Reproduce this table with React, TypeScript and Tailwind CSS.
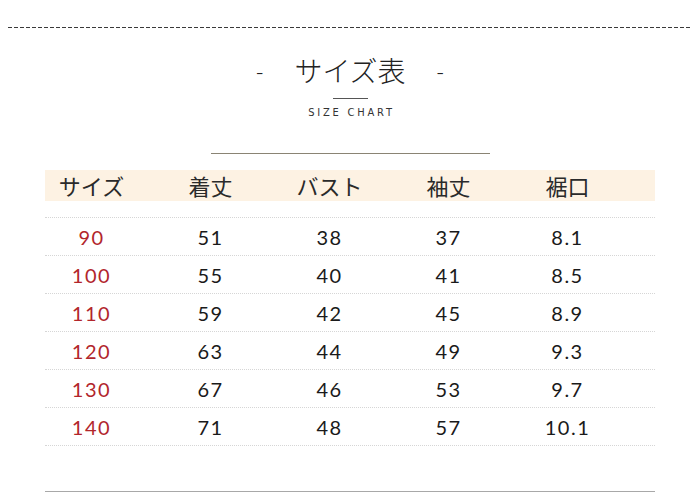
const headers = ['サイズ', '着丈', 'バスト', '袖丈', '裾口'];

const rows = [
  ['90', '51', '38', '37', '8.1'],
  ['100', '55', '40', '41', '8.5'],
  ['110', '59', '42', '45', '8.9'],
  ['120', '63', '44', '49', '9.3'],
  ['130', '67', '46', '53', '9.7'],
  ['140', '71', '48', '57', '10.1'],
];

const jp = "font-['Noto_Sans_CJK_JP',sans-serif]";
const num = "font-['Lato','Noto_Sans',sans-serif]";

export default function App() {
  return (
    <main className="w-[700px] h-[504px] bg-white overflow-hidden pt-[27px]">
      {/* top dashed rule */}
      <div className="mx-[8px] h-px bg-[repeating-linear-gradient(90deg,#3a3a3a_0_4px,transparent_4px_6px)]" />

      <div className={`mt-[28px] flex items-center justify-center gap-[31px] text-[#222] ${jp}`}>
        <span className="text-[22px] leading-[28px] font-light">-</span>
        <h1 className="text-[28px] leading-[28px] font-light">サイズ表</h1>
        <span className="text-[22px] leading-[28px] font-light">-</span>
      </div>

      <div className="mt-[14px] mx-auto w-[35px] h-px bg-[#555]" />
      <p className="mt-[8px] pl-[3px] text-center text-[11px] leading-[12px] tracking-[2.8px] text-[#333] font-stretch-condensed font-['DejaVu_Sans',sans-serif]">
        SIZE CHART
      </p>

      <div className="mt-[34px] mx-auto w-[279px] h-px bg-[#8a8474]" />

      <div className="mt-[16px] ml-[45px] w-[610px]">
        <div className="h-[31px] bg-[#fdf2e3]">
          <div className={`-ml-[13px] grid grid-cols-[repeat(5,119px)] items-center h-full text-[22px] leading-[31px] text-[#2a2a2a] ${jp}`}>
            {headers.map((h) => (
              <span key={h} className="text-center">{h}</span>
            ))}
          </div>
        </div>

        <div className="mt-[16px] border-t-[1.5px] border-dotted border-[#d6d6d6]">
          {rows.map((r) => (
            <div key={r[0]} className="h-[38px] border-b-[1.5px] border-dotted border-[#d6d6d6]">
              <div className={`-ml-[13px] grid grid-cols-[repeat(5,119px)] items-center h-full text-[20px] tracking-[1.5px] ${num}`}>
                {r.map((v, i) => (
                  <span key={i} className={`text-center ${i === 0 ? 'text-[#b2262c]' : 'text-[#1a1a1a]'}`}>
                    {v}
                  </span>
                ))}
              </div>
            </div>
          ))}
        </div>

        <div className="mt-[45px] h-px bg-[#a8a8a8]" />
      </div>
    </main>
  );
}
